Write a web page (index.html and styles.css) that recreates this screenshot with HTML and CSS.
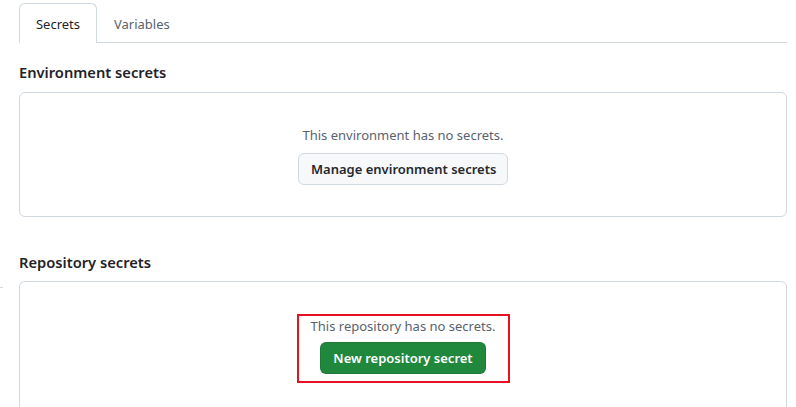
FILE: index.html
```html
<!DOCTYPE html>
<html lang="en">
<head>
<meta charset="utf-8">
<title>Secrets</title>
<link rel="stylesheet" href="styles.css">
</head>
<body>
<span class="edge-stub"></span>
<main class="page">
  <nav class="tabs">
    <a class="tab tab-active">Secrets</a>
    <a class="tab">Variables</a>
  </nav>

  <section class="group group-env">
    <h3 class="group-title">Environment secrets</h3>
    <div class="blank">
      <p class="blank-text">This environment has no secrets.</p>
      <button class="btn btn-default">Manage environment secrets</button>
    </div>
  </section>

  <section class="group group-repo">
    <h3 class="group-title">Repository secrets</h3>
    <div class="blank blank-repo">
      <div class="highlight">
        <p class="blank-text">This repository has no secrets.</p>
        <button class="btn btn-primary">New repository secret</button>
      </div>
    </div>
  </section>
</main>
</body>
</html>
```

FILE: styles.css
```css
html, body {
  margin: 0;
  padding: 0;
  overflow: hidden;
  background: #ffffff;
}

body {
  font-family: "Noto Sans", "Segoe UI", "Liberation Sans", sans-serif;
  color: #1f2328;
  position: relative;
  height: 407px;
}

.edge-stub {
  position: absolute;
  left: 0;
  top: 287px;
  width: 3px;
  height: 1px;
  background: #d0d7de;
}

.page {
  padding: 3px 9px 0 19px;
}

.tabs {
  display: flex;
  align-items: flex-end;
  border-bottom: 1px solid #d0d7de;
  height: 39px;
}

.tab {
  display: flex;
  align-items: center;
  justify-content: center;
  box-sizing: border-box;
  height: 40px;
  font-size: 13px;
  color: #59636e;
  padding: 0 17px 0 16px;
  border: 1px solid transparent;
  border-bottom: 0;
  border-radius: 6px 6px 0 0;
  margin-bottom: -1px;
}

.tab-active {
  width: 78px;
  padding: 0;
  color: #1f2328;
  background: #ffffff;
  border-color: #d0d7de;
}

.group-title {
  margin: 17px 0 8px;
  font-size: 14.7px;
  line-height: 24px;
  font-weight: 600;
  color: #1f2328;
}

.group-repo .group-title {
  margin-top: 33px;
  margin-bottom: 7px;
}

.blank {
  border: 1px solid #d0d7de;
  border-radius: 6px;
  padding: 32px 16px 31px;
  display: flex;
  flex-direction: column;
  align-items: center;
}

.blank-repo {
  padding-top: 32px;
  padding-bottom: 32px;
}

.blank-text {
  margin: 0;
  font-size: 13px;
  line-height: 20px;
  color: #59636e;
}

.btn {
  font-family: inherit;
  font-size: 13px;
  font-weight: 600;
  line-height: 20px;
  height: 32px;
  padding: 0 12px;
  border-radius: 6px;
  white-space: nowrap;
  cursor: pointer;
}

.btn-default {
  margin-top: 8px;
  width: 210px;
  background: #f6f8fa;
  color: #25292e;
  border: 1px solid #d1d9e0;
}

.highlight {
  display: flex;
  flex-direction: column;
  align-items: center;
  border: 2px solid #e81123;
  width: 213px;
  box-sizing: border-box;
  padding: 0 0 7px;
}

.btn-primary {
  margin-top: 6px;
  background: #1f883d;
  color: #ffffff;
  border: 1px solid rgba(31, 35, 40, 0.15);
  width: 166px;
}
```
